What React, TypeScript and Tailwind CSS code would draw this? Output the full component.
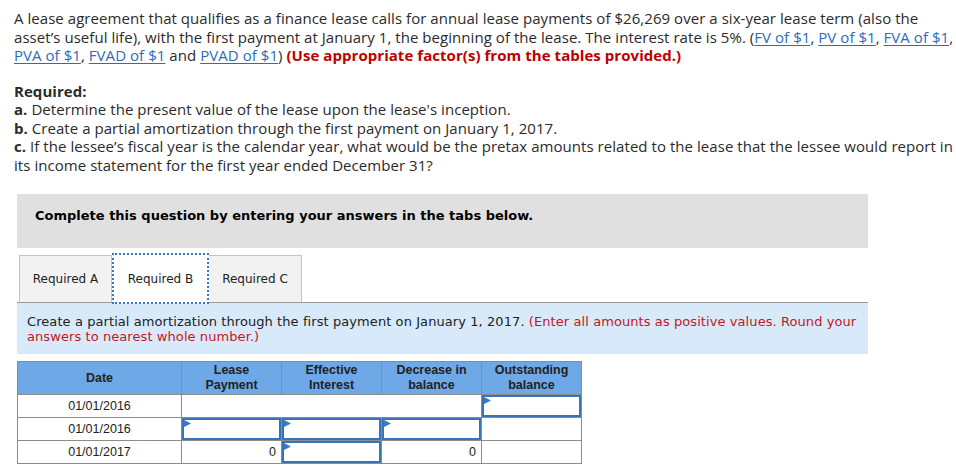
import React from "react";

const Link = ({ children }: { children: React.ReactNode }) => (
  <span className="text-[#2a6ebb] underline decoration-[1px] underline-offset-2">{children}</span>
);

const Flag = () => (
  <svg className="absolute left-0 top-0" width="7" height="7" viewBox="0 0 7 7">
    <polygon points="0,0 7,3.5 0,7" fill="#3a78c6" />
  </svg>
);

const InputCell = () => (
  <td className="p-0 border border-[#8c8c8c] h-[23px]">
    <div className="relative h-[22px] border-2 border-[#3a72b8] bg-white">
      <Flag />
    </div>
  </td>
);

const TextCell = ({ v = "", align = "right" }: { v?: string; align?: string }) => (
  <td
    className={
      "border border-[#8c8c8c] h-[23px] px-[5px] text-[12.5px] text-[#222] " +
      (align === "center" ? "text-center" : "text-right")
    }
  >
    {v}
  </td>
);

export default function App() {
  return (
    <div className="w-[956px] h-[471px] bg-white overflow-hidden text-[#222]">
      <div
        className="pl-[14px] pr-[2px] pt-[9px] text-[15px] leading-[18.5px] tracking-[0.05px] text-[#2b2b2b]"
        style={{ fontFamily: "'Open Sans', 'Noto Sans', sans-serif" }}
      >
        <p>
          A lease agreement that qualifies as a finance lease calls for annual lease payments of $26,269 over a
          six-year lease term (also the asset’s useful life), with the first payment at January 1, the beginning of
          the lease. The interest rate is 5%. (<Link>FV of $1</Link>, <Link>PV of $1</Link>,{" "}
          <Link>FVA of $1</Link>, <Link>PVA of $1</Link>, <Link>FVAD of $1</Link> and <Link>PVAD of $1</Link>){" "}
          <span className="font-bold text-[#c00000]">(Use appropriate factor(s) from the tables provided.)</span>
        </p>
        <div className="mt-[17px]">
          <p className="font-bold">Required:</p>
          <p>
            <b>a.</b> Determine the present value of the lease upon the lease's inception.
          </p>
          <p>
            <b>b.</b> Create a partial amortization through the first payment on January 1, 2017.
          </p>
          <p>
            <b>c.</b> If the lessee’s fiscal year is the calendar year, what would be the pretax amounts related to
            the lease that the lessee would report in its income statement for the first year ended December 31?
          </p>
        </div>
      </div>

      <div className="ml-[17px] w-[851px]" style={{ fontFamily: "'DejaVu Sans', Verdana, sans-serif" }}>
        <div className="mt-[20px] h-[54px] bg-[#e0e0e0] pl-[18px] pt-[14px] text-[13px] font-bold leading-[16px] text-black">
          Complete this question by entering your answers in the tabs below.
        </div>

        <div className="mt-[5px] flex items-end border-b border-[#999] pl-[2px]">
          <div className="flex h-[47px] w-[93px] items-center justify-center border border-b-0 border-[#c4c4c4] bg-[#f2f2f2] text-[12px]">
            Required A
          </div>
          <div className="relative -mb-[2px] flex h-[51px] w-[97px] items-center justify-center border-2 border-dotted border-[#3a78c6] bg-white text-[12px]">
            Required B
          </div>
          <div className="flex h-[47px] w-[93px] items-center justify-center border border-b-0 border-l-0 border-[#c4c4c4] bg-[#f2f2f2] text-[12px]">
            Required C
          </div>
        </div>

        <div className="h-[51px] bg-[#d8eaf9] pl-[10px] pt-[11px] text-[13px] leading-[15px] tracking-[0.08px]">
          Create a partial amortization through the first payment on January 1, 2017.{" "}
          <span className="text-[#c5161d]">
            (Enter all amounts as positive values. Round your answers to nearest whole number.)
          </span>
        </div>

        <table
          className="mt-[7px] border-collapse table-fixed"
          style={{ fontFamily: "'Liberation Sans', Arial, sans-serif" }}
        >
          <colgroup>
            <col className="w-[164px]" />
            <col className="w-[100px]" />
            <col className="w-[100px]" />
            <col className="w-[100px]" />
            <col className="w-[100px]" />
          </colgroup>
          <thead>
            <tr className="bg-[#6fa8e7] text-[12.5px] font-bold leading-[15px] text-[#222]">
              <th className="h-[33px] border border-[#8c8c8c]">Date</th>
              <th className="border border-[#8c8c8c]">
                Lease
                <br />
                Payment
              </th>
              <th className="border border-[#8c8c8c]">
                Effective
                <br />
                Interest
              </th>
              <th className="border border-[#8c8c8c]">
                Decrease in
                <br />
                balance
              </th>
              <th className="border border-[#8c8c8c]">
                Outstanding
                <br />
                balance
              </th>
            </tr>
          </thead>
          <tbody>
            <tr>
              <TextCell v="01/01/2016" align="center" />
              <td className="border-y border-[#8c8c8c]" />
              <td className="border-y border-[#8c8c8c]" />
              <td className="border-y border-[#8c8c8c]" />
              <InputCell />
            </tr>
            <tr>
              <TextCell v="01/01/2016" align="center" />
              <InputCell />
              <InputCell />
              <InputCell />
              <TextCell />
            </tr>
            <tr>
              <TextCell v="01/01/2017" align="center" />
              <TextCell v="0" />
              <InputCell />
              <TextCell v="0" />
              <TextCell />
            </tr>
          </tbody>
        </table>
      </div>
    </div>
  );
}
